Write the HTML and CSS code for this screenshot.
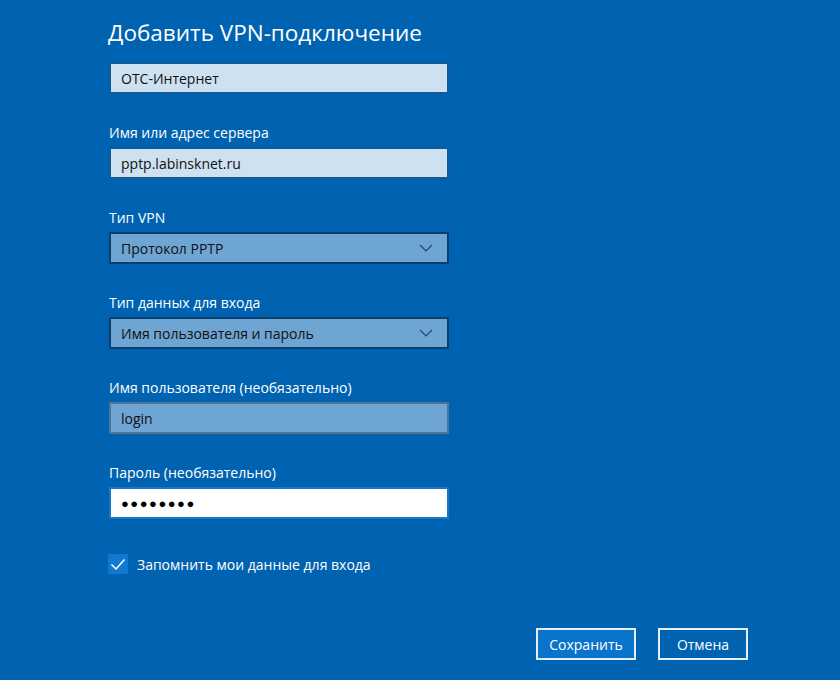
FILE: index.html
```html
<!DOCTYPE html>
<html lang="ru">

<head>
    <meta charset="UTF-8">
    <title>Добавить VPN-подключение</title>
    <link rel="stylesheet" href="styles.css">
</head>

<body>
    <div class="dialog">
        <h1 class="titulo">Добавить VPN-подключение</h1>

        <div class="campo primeiro">
            <div class="caixa texto">ОТС-Интернет</div>
        </div>

        <div class="campo">
            <label class="rotulo">Имя или адрес сервера</label>
            <div class="caixa texto">pptp.labinsknet.ru</div>
        </div>

        <div class="campo">
            <label class="rotulo">Тип VPN</label>
            <div class="caixa lista">
                <span>Протокол PPTP</span>
                <svg class="seta" width="14" height="8" viewBox="0 0 14 8"><path d="M1 1 L7 7 L13 1" fill="none" stroke="#1c4a78" stroke-width="1.2"/></svg>
            </div>
        </div>

        <div class="campo">
            <label class="rotulo">Тип данных для входа</label>
            <div class="caixa lista">
                <span>Имя пользователя и пароль</span>
                <svg class="seta" width="14" height="8" viewBox="0 0 14 8"><path d="M1 1 L7 7 L13 1" fill="none" stroke="#1c4a78" stroke-width="1.2"/></svg>
            </div>
        </div>

        <div class="campo">
            <label class="rotulo">Имя пользователя (необязательно)</label>
            <div class="caixa usuario">login</div>
        </div>

        <div class="campo">
            <label class="rotulo">Пароль (необязательно)</label>
            <div class="caixa senha">&#9679;&#9679;&#9679;&#9679;&#9679;&#9679;&#9679;&#9679;</div>
        </div>

        <div class="lembrar">
            <svg class="marca" width="20" height="20" viewBox="0 0 20 20"><path d="M3.5 10.5 L8 15 L16.5 5.5" fill="none" stroke="#ffffff" stroke-width="1.5"/></svg>
            <span>Запомнить мои данные для входа</span>
        </div>

        <div class="botoes">
            <button class="botao salvar">Сохранить</button>
            <button class="botao cancelar">Отмена</button>
        </div>
    </div>
</body>

</html>
```

FILE: styles.css
```css
html {
    background-color: #0063b1;
}

body {
    margin: 0;
    font-family: 'Open Sans', 'Noto Sans', sans-serif;
    color: #ffffff;
}

.dialog {
    padding: 16px 92px 0 108px;
}

.titulo {
    margin: 0;
    font-size: 22.5px;
    font-weight: 400;
    line-height: 34px;
    height: 46px;
}

.campo {
    display: flex;
    flex-direction: column;
    width: 340px;
    margin-top: 28px;
    margin-left: 1px;
}

.campo.primeiro {
    margin-top: 0;
}

.rotulo {
    font-size: 14px;
    line-height: 22px;
    height: 22px;
    margin: 0 0 3px 0;
}

.caixa {
    box-sizing: border-box;
    height: 32px;
    border: 2px solid #0a4a83;
    padding: 0 10px;
    display: flex;
    align-items: center;
    font-size: 14px;
    color: #111;
}

.texto {
    background-color: #cde1f1;
    border-color: #105a99;
}

.lista {
    background-color: #6fa5d2;
    border-color: #0b3e6f;
    justify-content: space-between;
}

.seta {
    margin-right: 4px;
}

.usuario {
    background-color: #6fa5d2;
    border-color: #4e7595;
}

.senha {
    background-color: #ffffff;
    border-color: #1878c8;
    font-size: 13px;
    letter-spacing: 1.5px;
    color: #000;
}

.lembrar {
    display: flex;
    align-items: center;
    gap: 9px;
    margin-top: 35px;
    font-size: 14px;
}

.marca {
    background-color: #1279d0;
}

.botoes {
    display: flex;
    justify-content: flex-end;
    gap: 22px;
    margin-top: 54px;
}

.botao {
    box-sizing: border-box;
    height: 32px;
    padding: 0;
    border: 2px solid #e6eef6;
    background-color: #0063b1;
    color: #ffffff;
    font-family: 'Open Sans', 'Noto Sans', sans-serif;
    font-size: 14px;
}

.salvar {
    width: 100px;
    background-color: #0a74cc;
}

.cancelar {
    width: 90px;
}
```
